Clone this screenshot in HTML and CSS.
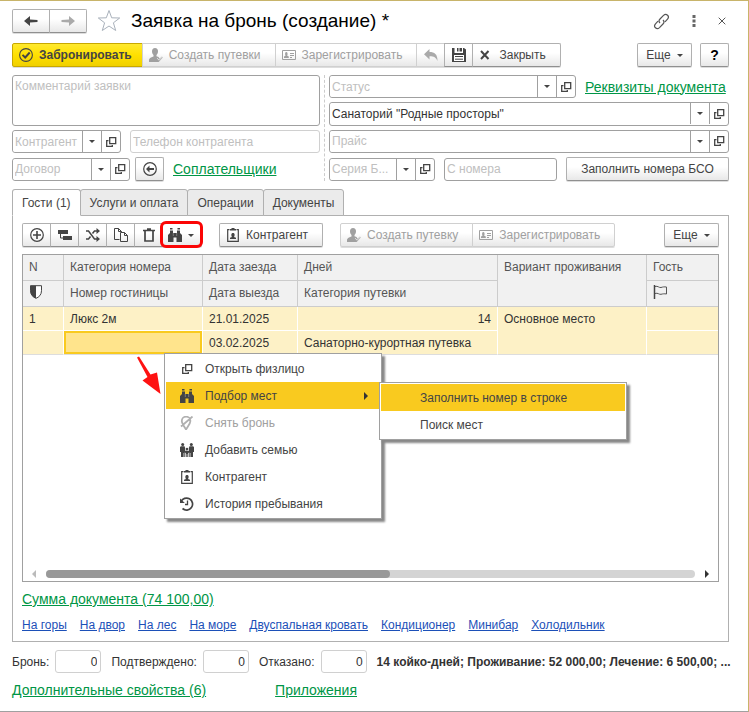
FILE: index.html
```html
<!DOCTYPE html>
<html lang="ru">

  <head>
    <meta charset="UTF-8">
    <meta name="viewport" content="width=device-width, initial-scale=1.0">
    <title>Заявка на бронь</title>
    <link rel="stylesheet" href="styles.css">
  </head>

  <body>
    <!-- icons used more than once -->
    <svg class="sprite">
      <symbol id="open" viewBox="0 0 12 12">
        <path d="M4.7 1.7h6v6h-6z M3.5 4.7H1.7v5.6h5.6V9" fill="none" stroke="currentColor" stroke-width="1.3"/>
      </symbol>
      <symbol id="person" viewBox="0 0 14 14">
        <path d="M6 0c2 0 3 1.400 3 3.200 0 1.700-.7 3-1.500 3.700v1.300l2 .8 1 1.800 2.500-2.300.8 1-3.600 4-.7.400H0v-2.200c0-1.400 1.500-2 4.500-3.300V6.900C3.700 6.200 3 4.900 3 3.200 3 1.400 4 0 6 0z" fill="currentColor"/>
        <path d="M8 10.200l2.200 2 3.600-3.700" fill="none" stroke="#fff" stroke-width=".7"/>
      </symbol>
      <symbol id="card" viewBox="0 0 14 12">
        <path d="M.5 1.500h13v9H.5z M8 4.500h4 M8 6.500h4 M8 8.500h2" fill="none" stroke="currentColor"/>
        <path d="M2 9V7.500l1.500-.7C2.800 5 3 3 4.300 3s1.700 2 .9 3.800l1.600.7V9z" fill="currentColor"/>
      </symbol>
      <symbol id="binoculars" viewBox="0 0 14 14">
        <path d="M2 0h2.500v1.500H2z M9.500 0H12v1.500H9.500z M2 2.500h3V5h4V2.500h3V5l2 2v7H8.500V9.500h-3V14H0V7l2-2z" fill="currentColor"/>
        <path d="M5.300 5v3 M8.700 5v3" stroke="#fff" stroke-width=".3"/>
      </symbol>
      <symbol id="badge" viewBox="0 0 14 14">
        <path d="M3.500 1.700H1.700v11.600h10.600V1.700h-1.800" fill="none" stroke="currentColor" stroke-width="1.200"/>
        <path d="M4 1h1.500V0h3v1H10v1.500H4z M4 11V9.800l2-.8C5 7.500 5 5 7 5S9 7.500 8 9l2 .8V11z" fill="currentColor"/>
      </symbol>
    </svg>

    <div class="window">
      <div class="header">
        <div class="group">
          <button class="nav" aria-label="Назад">
            <svg width="16" height="12" viewBox="0 0 16 12"><path d="M7 1v3.500L14.500 5v2L7 7.500V11L1 6z" fill="#444"/></svg>
          </button>
          <button class="nav" aria-label="Вперед">
            <svg width="16" height="12" viewBox="0 0 16 12"><path d="M9 1v3.500L1.500 5v2L9 7.500V11l6-5z" fill="#aaa"/></svg>
          </button>
        </div>
        <svg class="star" width="24" height="24" viewBox="0 0 24 24"><path d="M12 1.500l2.700 7.300 8 .2-6.300 4.800 2.300 7.700-6.700-4.500-6.700 4.500 2.300-7.700L1.300 9l8-.2z" fill="none" stroke="#a9b1bb"/></svg>
        <h1>Заявка на бронь (создание) *</h1>
        <div class="tools">
          <button aria-label="Ссылка">
            <svg width="17" height="17" viewBox="0 0 17 17"><path d="M7 10C5.500 8.500 6 7 7 6l3.500-3.600c2.800-2.600 6.600.8 4 3.800L12 8.800 M10 7c1.500 1.500 1 3 0 4l-3.500 3.600c-2.800 2.600-6.600-.8-4-3.800L5 8.200" fill="none" stroke="#555" stroke-width="1.200"/></svg>
          </button>
          <button aria-label="Меню">
            <svg width="4" height="14" viewBox="0 0 4 14"><path d="M.5 1h3v3h-3z M.5 5.500h3v3h-3z M.5 10h3v3h-3z" fill="#666"/></svg>
          </button>
          <button aria-label="Закрыть окно">
            <svg width="8" height="8" viewBox="0 0 8 8"><path d="M.7.700l6.600 6.600 M7.300.700L.7 7.300" stroke="#555"/></svg>
          </button>
        </div>
      </div>

      <div class="toolbar">
        <div class="group">
          <button class="primary">
            <svg width="14" height="14" viewBox="0 0 14 14"><circle cx="7" cy="7" r="6.400" fill="none" stroke="#444" stroke-width="1.100"/><path d="M3.500 6.800l2.700 2.700 4.500-5" fill="none" stroke="#444" stroke-width="1.900"/></svg>
            Забронировать
          </button>
          <button disabled><svg width="14" height="14"><use href="#person"/></svg>Создать путевки</button>
          <button disabled><svg width="14" height="12"><use href="#card"/></svg>Зарегистрировать</button>
          <button class="square" disabled aria-label="Отменить">
            <svg width="14" height="12" viewBox="0 0 14 12"><path d="M5.500 0v3c5 0 8 2 8 9C12 8.500 10 7.300 5.500 7.300V10.500L0 5.200z" fill="#aaa"/></svg>
          </button>
          <button class="square" aria-label="Записать">
            <svg width="14" height="14" viewBox="0 0 14 14"><path d="M0 0h2.500v5h8.500V0h1L14 1.500V14H0z M5 0h1.500v3.500H5z M7.500 0H10v3.500H7.500z" fill="#444"/><path d="M2 7h10v6H2z" fill="#fff"/><path d="M3 8.500h8 M3 11.200h8" stroke="#444"/></svg>
          </button>
          <button>
            <svg width="14" height="10" viewBox="0 0 14 10"><path d="M2 1l7.500 8 M9.500 1L2 9" stroke="#444" stroke-width="2"/></svg>
            Закрыть
          </button>
        </div>
        <div class="right">
          <button class="more">Еще <i class="caret"></i></button>
          <button class="square help">?</button>
        </div>
      </div>

      <div class="form">
        <div class="left-col">
          <textarea placeholder="Комментарий заявки" aria-label="Комментарий заявки"></textarea>
          <div class="row">
            <div class="combo contractor">
              <input type="text" placeholder="Контрагент" aria-label="Контрагент">
              <button aria-label="Выбрать"><i class="caret"></i></button>
              <button aria-label="Открыть"><svg width="12" height="12"><use href="#open"/></svg></button>
            </div>
            <input type="text" class="field pale" placeholder="Телефон контрагента" aria-label="Телефон контрагента">
          </div>
          <div class="row">
            <div class="combo contract">
              <input type="text" placeholder="Договор" aria-label="Договор">
              <button aria-label="Выбрать"><i class="caret"></i></button>
              <button aria-label="Открыть"><svg width="12" height="12"><use href="#open"/></svg></button>
            </div>
            <button class="square back" aria-label="Заполнить">
              <svg width="14" height="14" viewBox="0 0 14 14"><circle cx="7" cy="7" r="6.300" fill="none" stroke="#444" stroke-width="1.200"/><path d="M6.500 3.500v2.500H11v2H6.500v2.500L3 7z" fill="#444"/></svg>
            </button>
            <a href="#" class="green">Соплательщики</a>
          </div>
        </div>

        <div class="right-col">
          <div class="row">
            <div class="combo status">
              <input type="text" placeholder="Статус" aria-label="Статус">
              <button aria-label="Выбрать"><i class="caret"></i></button>
              <button aria-label="Открыть"><svg width="12" height="12"><use href="#open"/></svg></button>
            </div>
            <a href="#" class="green">Реквизиты документа</a>
          </div>
          <div class="combo">
            <input type="text" value="Санаторий &quot;Родные просторы&quot;" aria-label="Санаторий">
            <button aria-label="Выбрать"><i class="caret"></i></button>
            <button aria-label="Открыть"><svg width="12" height="12"><use href="#open"/></svg></button>
          </div>
          <div class="combo">
            <input type="text" placeholder="Прайс" aria-label="Прайс">
            <button aria-label="Выбрать"><i class="caret"></i></button>
            <button aria-label="Открыть"><svg width="12" height="12"><use href="#open"/></svg></button>
          </div>
          <div class="row">
            <div class="combo series">
              <input type="text" placeholder="Серия Б..." aria-label="Серия">
              <button aria-label="Выбрать"><i class="caret"></i></button>
              <button aria-label="Открыть"><svg width="12" height="12"><use href="#open"/></svg></button>
            </div>
            <input type="text" class="field" placeholder="С номера" aria-label="С номера">
            <button class="fill">Заполнить номера БСО</button>
          </div>
        </div>
      </div>

      <div class="tabs">
        <button class="tab active">Гости (1)</button>
        <button class="tab">Услуги и оплата</button>
        <button class="tab">Операции</button>
        <button class="tab">Документы</button>
      </div>

      <div class="panel">
        <div class="toolbar">
          <div class="group">
            <button class="square" aria-label="Добавить">
              <svg width="14" height="14" viewBox="0 0 14 14"><circle cx="7" cy="7" r="6.300" fill="none" stroke="#444" stroke-width="1.200"/><path d="M7 3v8 M3 7h8" stroke="#444" stroke-width="1.600"/></svg>
            </button>
            <button class="square" aria-label="Подобрать">
              <svg width="14" height="12" viewBox="0 0 14 12"><path d="M0 1h10v4H0z M5 7h9v4H5z" fill="#444"/><path d="M2.500 5v4H5" fill="none" stroke="#444"/></svg>
            </button>
            <button class="square" aria-label="Перемешать">
              <svg width="14" height="14" viewBox="0 0 14 14"><path d="M0 3h2.500l6 8H11 M0 11h2.500l2-2.500 M6.500 5.500l2-2.500H11" fill="none" stroke="#444" stroke-width="1.500"/><path d="M10.500 0L14 3l-3.500 3z M10.500 8l3.500 3-3.500 3z" fill="#444"/></svg>
            </button>
            <button class="square" aria-label="Копировать">
              <svg width="14" height="14" viewBox="0 0 14 14"><path d="M5.500 11.500h-5v-11h4l3 3v1 M4.500.500v3h3 M6.500 4.500h4l3 3v6h-7z M10.500 4.500v3h3" fill="none" stroke="#444"/></svg>
            </button>
            <button class="square" aria-label="Удалить">
              <svg width="12" height="14" viewBox="0 0 12 14"><path d="M0 2.500h12 M4 1h4" stroke="#444" stroke-width="1.600"/><path d="M2 3v10h8V3" fill="none" stroke="#444" stroke-width="1.700"/></svg>
            </button>
            <button class="picker marked" aria-label="Подбор мест"><svg width="14" height="14"><use href="#binoculars"/></svg><i class="caret"></i></button>
          </div>
          <button class="client"><svg width="14" height="14"><use href="#badge"/></svg>Контрагент</button>
          <div class="group">
            <button disabled><svg width="14" height="14"><use href="#person"/></svg>Создать путевку</button>
            <button disabled><svg width="14" height="12"><use href="#card"/></svg>Зарегистрировать</button>
          </div>
          <div class="right">
            <button class="more">Еще <i class="caret"></i></button>
          </div>
        </div>

        <div class="guests">
          <table>
            <colgroup>
              <col class="c-num"><col class="c-room"><col class="c-date"><col class="c-days"><col class="c-type"><col>
            </colgroup>
            <thead>
              <tr>
                <th>N</th>
                <th>Категория номера</th>
                <th>Дата заезда</th>
                <th>Дней</th>
                <th rowspan="2">Вариант проживания</th>
                <th>Гость</th>
              </tr>
              <tr>
                <th><svg width="14" height="14" viewBox="0 0 14 14"><path d="M1.500.700h11v5c0 4-2.500 6.500-5.500 7.600C4 12.200 1.500 9.700 1.500 5.700z" fill="#fff" stroke="#444"/><path d="M7 .700H1.500v5c0 4 2.500 6.500 5.500 7.600z" fill="#444"/></svg></th>
                <th>Номер гостиницы</th>
                <th>Дата выезда</th>
                <th>Категория путевки</th>
                <th><svg width="14" height="14" viewBox="0 0 14 14"><path d="M1.500 0v14" stroke="#444" stroke-width="1.500"/><path d="M2 1.500c3-1 4 1.500 6 1 2-.6 3-.8 5.500-.5v7c-2.500-.4-3.500-.2-5.500.3C6 9.700 5 7.500 2 8.500" fill="none" stroke="#555"/></svg></th>
              </tr>
            </thead>
            <tbody>
              <tr>
                <td>1</td>
                <td>Люкс 2м</td>
                <td>21.01.2025</td>
                <td class="num">14</td>
                <td rowspan="2">Основное место</td>
                <td></td>
              </tr>
              <tr>
                <td></td>
                <td class="current"></td>
                <td>03.02.2025</td>
                <td>Санаторно-курортная путевка</td>
                <td></td>
              </tr>
            </tbody>
          </table>

          <div class="scrollbar">
            <i class="arrow-left"></i>
            <div class="track"><div class="thumb"></div></div>
            <i class="arrow-right"></i>
          </div>

          <svg class="pointer" width="26" height="40" viewBox="0 0 26 40"><path d="M1 1.500L3 .500 14.500 18.500 21 16.500 24.500 38 6.500 24.500 11.500 21z" fill="#fe1212"/></svg>

          <div class="menu">
            <button class="item"><svg width="14" height="12"><use href="#open"/></svg>Открыть физлицо</button>
            <button class="item selected"><svg width="14" height="14"><use href="#binoculars"/></svg>Подбор мест<i class="arrow-right"></i></button>
            <button class="item" disabled>
              <svg width="14" height="14" viewBox="0 0 14 14"><path d="M6 13.500C3.500 9.500 1.800 7.500 1.800 5a4.300 4.300 0 0 1 8.600 0c0 2.500-2 4.500-4.400 8.500z M1 10.500L12.500.500" fill="none" stroke="#b0b0b0" stroke-width="1.800"/></svg>
              Снять бронь
            </button>
            <button class="item">
              <svg width="14" height="14" viewBox="0 0 14 14"><g fill="#444"><circle cx="2.700" cy="1.600" r="1.500"/><circle cx="11.300" cy="1.600" r="1.500"/><circle cx="7" cy="6" r="1.200"/><path d="M0 4l1-.8h3.500L5.200 5v3l1.500-.6L8.800 8V5l.7-1.800H13l1 .8v5h-1v5h-2v-4h-.4v4H9.300V9.500L8.300 10v4H7.300v-3h-.6v3h-1v-4l-1-.5V14H3.400v-4H3v4H1V9H0z"/></g></svg>
              Добавить семью
            </button>
            <button class="item"><svg width="14" height="14"><use href="#badge"/></svg>Контрагент</button>
            <button class="item">
              <svg width="14" height="14" viewBox="0 0 14 14"><path d="M1 4.800A6 6 0 1 1 2.500 11.500" fill="none" stroke="#444" stroke-width="1.700"/><path d="M0 1.500V6h4.800z" fill="#444"/><path d="M7.500 3.500V7.500H5" fill="none" stroke="#444" stroke-width="1.300"/></svg>
              История пребывания
            </button>
          </div>
          <div class="menu submenu">
            <button class="item selected">Заполнить номер в строке</button>
            <button class="item">Поиск мест</button>
          </div>
        </div>

        <a href="#" class="green">Сумма документа (74 100,00)</a>
        <div class="tags">
          <a href="#">На горы</a>
          <a href="#">На двор</a>
          <a href="#">На лес</a>
          <a href="#">На море</a>
          <a href="#">Двуспальная кровать</a>
          <a href="#">Кондиционер</a>
          <a href="#">Минибар</a>
          <a href="#">Холодильник</a>
        </div>
      </div>

      <div class="totals">
        <label for="booked">Бронь:</label>
        <input type="text" id="booked" value="0">
        <label for="confirmed">Подтверждено:</label>
        <input type="text" id="confirmed" value="0">
        <label for="refused">Отказано:</label>
        <input type="text" id="refused" value="0">
        <b>14 койко-дней; Проживание: 52 000,00; Лечение: 6 500,00; ...</b>
      </div>

      <div class="links">
        <a href="#" class="green">Дополнительные свойства (6)</a>
        <a href="#" class="green">Приложения</a>
      </div>
    </div>
  </body>
</html>
```

FILE: styles.css
```css
* {
  box-sizing: border-box;
}

body {
  margin: 0;
  background-color: white;
  color: #333;
  font-family: "Liberation Sans", Arial, sans-serif;
  font-size: 12px;
  line-height: 16px;
}

.sprite {
  display: none;
}

.window {
  min-height: 100vh;
  padding: 8px 19px 12px 12px;
  border-top: 1px solid #c8b46a;
  border-right: 1px solid #c8b46a;
  border-bottom: 1px solid #a0a0a0;
}

/* buttons */
button {
  display: flex;
  align-items: center;
  gap: 6px;
  height: 24px;
  padding: 0 14px 0 6px;
  border: 1px solid #b0b0b0;
  border-bottom-color: #909090;
  border-radius: 2px;
  background: linear-gradient(#fff 40%, #e8e8e8);
  box-shadow: 0 1px 0 #ddd;
  color: #444;
  font: inherit;
  white-space: nowrap;
}

button:disabled {
  border-color: #d0d0d0;
  color: #a0a0a0;
}

button svg {
  flex: none;
}

.group {
  display: flex;
}

.group button {
  border-radius: 0;
}

.group button + button {
  margin-left: -1px;
}

.group button:first-child {
  border-radius: 2px 0 0 2px;
}

.group button:last-child {
  border-radius: 0 2px 2px 0;
}

button.square {
  justify-content: center;
  width: 29px;
  padding: 0;
}

button.primary {
  padding-right: 10px;
  border-color: #c8a800;
  background: linear-gradient(#ffe92e, #ffe000 50%, #f0d000);
  font-weight: bold;
}

.more {
  justify-content: center;
  width: 55px;
  padding: 0;
}

.help {
  color: black;
  font-size: 14px;
  font-weight: bold;
}

.caret {
  width: 0;
  border: 3px solid transparent;
  border-top-color: #444;
  border-bottom: 0;
}

.arrow-left,
.arrow-right {
  border: 4px solid transparent;
  border-left-color: #333;
  border-right: 0;
}

.arrow-left {
  border-right: 4px solid #bbb;
  border-left: 0;
}

a {
  color: #1c50b8;
}

.green {
  color: #009646;
  font-size: 14px;
  white-space: nowrap;
}

/* header */
.header {
  display: flex;
  align-items: center;
}

.nav {
  justify-content: center;
  width: 38px;
  padding: 0;
}

.star {
  margin: 0 10px;
}

h1 {
  margin: 0;
  color: black;
  font-size: 19px;
  font-weight: normal;
  line-height: 24px;
}

.tools {
  display: flex;
  align-items: center;
  gap: 22px;
  margin-left: auto;
  margin-right: 3px;
}

.tools button {
  padding: 0;
  border: 0;
  background: none;
  box-shadow: none;
}

.toolbar {
  display: flex;
  margin-top: 10px;
}

.right {
  display: flex;
  gap: 8px;
  margin-left: auto;
}

/* form */
.form {
  display: grid;
  grid-template-columns: minmax(0, 313fr) minmax(0, 404fr);
  margin-top: 8px;
}

.left-col,
.right-col {
  display: flex;
  flex-direction: column;
  gap: 4px;
}

.left-col {
  padding-right: 4px;
  border-right: 1px dashed #ccc;
}

.right-col {
  padding-left: 4px;
}

.row {
  display: flex;
  align-items: center;
  gap: 9px;
}

input,
textarea {
  min-width: 0;
  height: 23px;
  margin: 0;
  padding: 0 2px;
  border: 1px solid #a0a0a0;
  border-radius: 3px;
  background-color: white;
  color: #333;
  font: inherit;
}

::placeholder {
  color: #c0c0c0;
  opacity: 1;
}

textarea {
  display: block;
  width: 100%;
  height: 51px;
  padding-top: 2px;
  resize: none;
}

.field {
  flex: 1;
}

.pale {
  border-color: #d0d0d0;
}

.combo {
  display: flex;
  flex: 1 1 auto;
  min-width: 0;
  height: 23px;
  border: 1px solid #a0a0a0;
  border-radius: 3px;
}

.combo input {
  flex: 1;
  height: 21px;
  border: 0;
}

.combo button {
  flex: none;
  justify-content: center;
  width: 19px;
  height: 21px;
  padding: 0;
  border: 0;
  border-left: 1px solid #a0a0a0;
  border-radius: 0;
  background: none;
  box-shadow: none;
}

.contractor {
  flex: 0 0 109px;
}

.contract {
  flex: 0 0 118px;
}

.status {
  flex: 0 1 247px;
}

.series {
  flex: 0 0 106px;
}

.back {
  margin-left: -4px;
}

.fill {
  justify-content: center;
  width: 163px;
  padding: 0;
}

/* tabs */
.tabs {
  display: flex;
  margin-top: 8px;
}

.tab {
  height: 27px;
  padding: 0 9px;
  border: 1px solid #b0b0b0;
  border-radius: 3px 3px 0 0;
  background: #ebebeb;
  box-shadow: none;
}

.tab + .tab {
  margin-left: -1px;
}

.active {
  position: relative;
  border-bottom-color: white;
  background: white;
}

.panel {
  margin-top: -1px;
  padding: 7px 9px 8px;
  border: 1px solid #b0b0b0;
}

.panel .toolbar {
  margin-top: 0;
}

.picker {
  gap: 6px;
  padding: 0 7px 0 5px;
}

/* red frame round the picker */
.marked {
  position: relative;
}

.marked::after {
  content: "";
  position: absolute;
  inset: -3px -2px -2px -3px;
  border: 3px solid #fb0505;
  border-radius: 6px;
}

.client {
  margin: 0 17px;
}

/* guests */
.guests {
  position: relative;
  display: flex;
  flex-direction: column;
  min-height: 328px;
  margin: 7px 0 9px;
  border: 1px solid #a0a0a0;
}

table {
  width: 100%;
  border-spacing: 0;
  table-layout: fixed;
}

.c-num {
  width: 41px;
}

.c-room {
  width: 139px;
}

.c-date {
  width: 95px;
}

.c-days {
  width: 200px;
}

.c-type {
  width: 149px;
}

th,
td {
  height: 26px;
  padding: 0 6px;
  text-align: left;
  vertical-align: top;
  white-space: nowrap;
}

th {
  padding-top: 4px;
  border-right: 1px solid #ccc;
  border-bottom: 1px solid #ccc;
  background-color: #f1f1f1;
  color: #555;
  font-weight: normal;
}

td {
  height: 24px;
  padding-top: 4px;
  border-right: 1px solid white;
  border-bottom: 1px solid white;
  background-color: #fdf1c6;
}

tbody tr:last-child td,
td[rowspan] {
  border-bottom-color: #ddd;
}

th:last-child,
td:last-child {
  border-right: 0;
}

th svg {
  display: block;
}

.num {
  text-align: right;
}

.current {
  background-color: #ffe48c;
  box-shadow: inset 0 0 0 2px #f9ca1f;
}

.scrollbar {
  display: flex;
  align-items: center;
  gap: 10px;
  margin-top: auto;
  padding: 3px 9px;
}

.track {
  flex: 1;
  height: 8px;
  border-radius: 4px;
  background-color: #d4d4d4;
}

.thumb {
  width: 53%;
  height: 8px;
  border-radius: 4px;
  background-color: #999;
}

.pointer {
  position: absolute;
  top: 101px;
  left: 113px;
}

/* menus */
.menu {
  position: absolute;
  top: 98px;
  left: 141px;
  width: 218px;
  padding: 1px;
  border: 1px solid #a0a0a0;
  background-color: white;
  box-shadow: 3px 3px 2px #888;
}

.submenu {
  top: 127px;
  left: 356px;
  width: 248px;
}

.item {
  gap: 11px;
  width: 100%;
  height: 27px;
  padding: 0 12px 0 14px;
  border: 0;
  border-radius: 0;
  background: none;
  box-shadow: none;
}

.item .arrow-right {
  margin-left: auto;
}

.submenu .item {
  padding-left: 39px;
}

.selected {
  background-color: #f9ca1f;
}

.tags {
  display: flex;
  flex-wrap: wrap;
  gap: 13px;
  margin-top: 9px;
}

/* footer */
.totals {
  display: flex;
  align-items: center;
  margin-top: 8px;
}

.totals input {
  flex: none;
  width: 46px;
  margin: 0 10px 0 6px;
  padding-right: 3px;
  border-color: #d0d0d0;
  text-align: right;
}

.totals b {
  white-space: nowrap;
}

.links {
  display: flex;
  gap: 69px;
  margin-top: 9px;
}
```
